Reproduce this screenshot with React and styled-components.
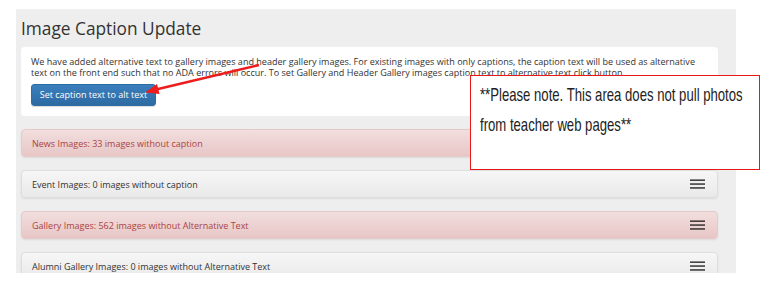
import React from 'react';
import styled, { createGlobalStyle } from 'styled-components';

const GlobalStyle = createGlobalStyle`
  html, body {
    margin: 0;
    padding: 0;
    background: #fff;
  }
  body {
    font-family: "Open Sans", "Liberation Sans", sans-serif;
  }
`;

const Page = styled.div`
  position: relative;
  width: 769px;
  height: 287px;
  overflow: hidden;
  padding-top: 9px;
  box-sizing: border-box;
`;

const Panel = styled.div`
  margin-left: 16px;
  width: 720px;
  height: 264px;
  box-sizing: border-box;
  padding: 0 18px 0 5px;
  background: #eeeeee;
  overflow: hidden;
`;

const Title = styled.h1`
  margin: 0 0 5px;
  padding-top: 7px;
  font-size: 17.3px;
  font-weight: 400;
  line-height: 26px;
  color: #333;
`;

const Card = styled.div`
  background: #fff;
  border-radius: 4px;
  padding: 10px 14px 10px 10px;
  margin-bottom: 13px;
`;

const Lead = styled.p`
  margin: 0 0 6px;
  font-size: 9.05px;
  line-height: 10.5px;
  color: #333;
`;

const Button = styled.button`
  display: block;
  width: 125px;
  height: 22px;
  padding: 0;
  border: 1px solid #2e6da4;
  border-radius: 3px;
  background: linear-gradient(#3a7fbd, #2d6aa2);
  color: #fff;
  font-family: "Open Sans", "Liberation Sans", sans-serif;
  font-size: 9px;
  line-height: 20px;
  box-shadow: 0 1px 1px rgba(0, 0, 0, 0.15);
`;

const Rows = styled.div`
  display: flex;
  flex-direction: column;
  gap: 13px;
`;

const Row = styled.div`
  display: flex;
  align-items: center;
  justify-content: space-between;
  height: 28px;
  box-sizing: border-box;
  padding: 0 12px 0 10px;
  border: 1px solid ${p => (p.$alert ? '#e6caca' : '#dedede')};
  border-radius: 4px;
  background: ${p => (p.$alert
    ? 'linear-gradient(#f2dede, #e8c6c6)'
    : 'linear-gradient(#f6f6f6, #e9e9e9)')};
  box-shadow: 0 1px 2px rgba(0, 0, 0, 0.08);
  font-size: 9px;
  color: ${p => (p.$alert ? '#a94442' : '#333')};
`;

const Burger = () => (
  <svg width="15" height="10" viewBox="0 0 15 10">
    <rect x="0" y="0.5" width="15" height="1.3" fill="#1a1a1a" />
    <rect x="0" y="4.4" width="15" height="1.3" fill="#1a1a1a" />
    <rect x="0" y="8.3" width="15" height="1.3" fill="#1a1a1a" />
  </svg>
);

const Callout = styled.div`
  position: absolute;
  left: 470px;
  top: 75px;
  width: 290px;
  height: 95px;
  box-sizing: border-box;
  border: 1.5px solid #e81818;
  background: #fff;
  padding: 4px 0 0 8.5px;
  font-family: "Liberation Sans", Arial, sans-serif;
  font-size: 18.5px;
  line-height: 30px;
  color: #222;
`;

const NoteLine = styled.div`
  white-space: nowrap;
  transform: scaleX(0.71);
  transform-origin: left center;
`;

const Arrow = styled.svg`
  position: absolute;
  left: 0;
  top: 0;
  pointer-events: none;
`;

const rows = [
  { text: 'News Images: 33 images without caption', alert: true, menu: false },
  { text: 'Event Images: 0 images without caption', alert: false, menu: true },
  { text: 'Gallery Images: 562 images without Alternative Text', alert: true, menu: true },
  { text: 'Alumni Gallery Images: 0 images without Alternative Text', alert: false, menu: true }
];

export default function App() {
  return (
    <Page>
      <GlobalStyle />
      <Panel>
        <Title>Image Caption Update</Title>
        <Card>
          <Lead>
            We have added alternative text to gallery images and header gallery images. For existing images with only captions, the caption text will be used as alternative
            text on the front end such that no ADA errors will occur. To set Gallery and Header Gallery images caption text to alternative text click button.
          </Lead>
          <Button>Set caption text to alt text</Button>
        </Card>
        <Rows>
          {rows.map(r => (
            <Row key={r.text} $alert={r.alert}>
              {r.text}
              {r.menu && <Burger />}
            </Row>
          ))}
        </Rows>
      </Panel>
      <Arrow width="769" height="287" viewBox="0 0 769 287">
        <line x1="259" y1="65" x2="156" y2="89.5" stroke="#ee1c1c" strokeWidth="2.6" />
        <polygon points="145,92.5 157,84 159.5,94" fill="#ee1c1c" />
      </Arrow>
      <Callout>
        <NoteLine>**Please note. This area does not pull photos</NoteLine>
        <NoteLine>from teacher web pages**</NoteLine>
      </Callout>
    </Page>
  );
}
